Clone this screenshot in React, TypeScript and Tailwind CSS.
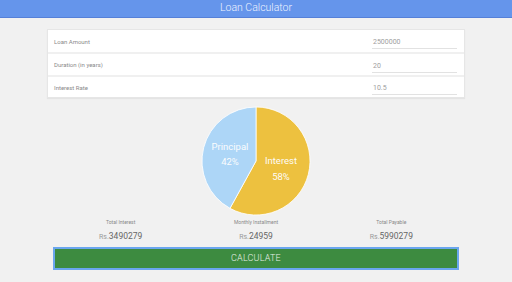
import React from "react";

const rows = [
  { label: "Loan Amount", value: "2500000", h: "h-[22px]" },
  { label: "Duration (in years)", value: "20", h: "h-[23px]" },
  { label: "Interest Rate", value: "10.5", h: "h-[22px]" },
];

const stats = [
  { label: "Total Interest", value: "3490279" },
  { label: "Monthly Installment", value: "24959" },
  { label: "Total Payable", value: "5990279" },
];

function PieChart() {
  // interest 58% starting at 12 o'clock, clockwise
  const r = 54;
  const c = 55;
  const a = 0.58 * Math.PI * 2;
  const x = c + r * Math.sin(a);
  const y = c - r * Math.cos(a);
  return (
    <svg width="110" height="110" viewBox="0 0 110 110">
      <path
        d={`M${c} ${c} L${c} ${c - r} A${r} ${r} 0 1 1 ${x} ${y} Z`}
        fill="#edc13f"
        stroke="#ffffff"
        strokeWidth="0.8"
      />
      <path
        d={`M${c} ${c} L${x} ${y} A${r} ${r} 0 0 1 ${c} ${c - r} Z`}
        fill="#add6f7"
        stroke="#ffffff"
        strokeWidth="0.8"
      />
      <g fill="#ffffff" fontFamily="Roboto, sans-serif" fontSize="9.5" textAnchor="middle" opacity="0.95">
        <text x="29" y="44">Principal</text>
        <text x="29" y="58.5">42%</text>
        <text x="80" y="57.5">Interest</text>
        <text x="80" y="73.5">58%</text>
      </g>
    </svg>
  );
}

export default function App() {
  return (
    <div className="w-[512px] h-[282px] bg-[#f1f1f1] overflow-hidden font-['Roboto',sans-serif]">
      <div className="h-[18px] bg-[#6595eb] border-b border-[#5580d8] flex items-center justify-center">
        <span className="text-[10.5px] font-light leading-none text-[#eef3ff]">Loan Calculator</span>
      </div>

      <div className="mx-[47px] mt-[11px] bg-white border border-[#e6e6e6] shadow-[0_1px_1px_rgba(0,0,0,0.05)]">
        {rows.map((row, i) => (
          <div
            key={row.label}
            className={`${row.h} flex items-center justify-between pl-[6px] pr-[6px] ${
              i > 0 ? "border-t-2 border-[#f0f0f0]" : ""
            }`}
          >
            <span className="text-[6px] text-[#8a8a8a]">{row.label}</span>
            <div className="w-[85px] mr-[1px] border-b border-[#e2e2e2] pb-[1px] leading-[9px] mt-[1px]">
              <span className="text-[7px] text-[#a0a0a0] pl-[1px]">{row.value}</span>
            </div>
          </div>
        ))}
      </div>

      <div className="flex justify-center mt-[8px]">
        <PieChart />
      </div>

      <div className="mx-[53px] mt-[2px] grid grid-cols-3">
        {stats.map((s) => (
          <div key={s.label} className="flex flex-col items-center">
            <span className="text-[5px] leading-[8px] text-[#888888]">{s.label}</span>
            <span className="mt-[3px] leading-[10px] text-[#666666]">
              <span className="text-[7px] text-[#9a9a9a]">Rs.</span>
              <span className="text-[8.5px]">{s.value}</span>
            </span>
          </div>
        ))}
      </div>

      <div className="mx-[53px] mt-[5px] h-[23px] bg-[#3d8b40] border-2 border-[#6aa6ee] flex items-center justify-center">
        <span className="text-[9px] font-light text-[#e6efe6] tracking-[0.2px]">CALCULATE</span>
      </div>
    </div>
  );
}
